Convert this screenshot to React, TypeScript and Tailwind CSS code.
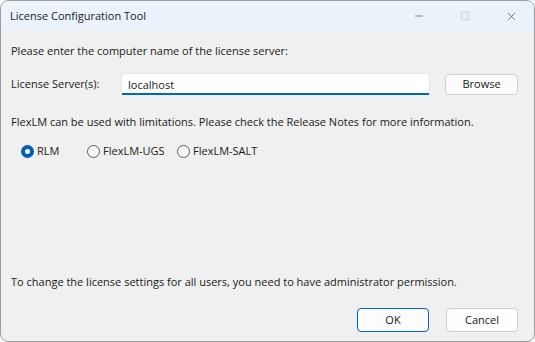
import { Minus, Square, X } from 'lucide-react';

function Radio({ label, checked, width }: { label: string; checked?: boolean; width: string }) {
  return (
    <label className={`flex items-center gap-[3px] ${width}`}>
      {checked ? (
        <span className="flex h-[13px] w-[13px] items-center justify-center rounded-full bg-[#005fb8]">
          <span className="h-[5px] w-[5px] rounded-full bg-white" />
        </span>
      ) : (
        <span className="h-[13px] w-[13px] rounded-full border border-[#5d5d5d] bg-[#f7f7f7]" />
      )}
      <span>{label}</span>
    </label>
  );
}

function App() {
  return (
    <div
      className="flex h-[342px] w-[535px] flex-col overflow-hidden rounded-t-lg rounded-b-lg border border-[#9d9d9d] bg-[#f0f0f0] text-[11px] leading-4 text-[#1a1a1a]"
      style={{ fontFamily: '"Open Sans", "Noto Sans", sans-serif' }}
    >
      <header className="flex h-[30px] shrink-0 items-center bg-[#eaf3fa] pl-[9px]">
        <span className="flex-1">License Configuration Tool</span>
        <div className="flex items-center text-[#1a1a1a]">
          <span className="flex w-[46px] justify-center">
            <Minus size={12} strokeWidth={1} />
          </span>
          <span className="flex w-[46px] justify-center text-[#a8a8a8]">
            <Square size={10} strokeWidth={1} />
          </span>
          <span className="flex w-[46px] justify-center">
            <X size={13} strokeWidth={1} />
          </span>
        </div>
      </header>

      <main className="flex flex-1 flex-col px-[10px] pb-[9px]">
        <p className="mt-3">Please enter the computer name of the license server:</p>

        <div className="mt-[14px] flex items-center">
          <span className="w-[110px]">License Server(s):</span>
          <div className="flex h-[22px] w-[309px] items-center rounded-t-[3px] border border-b-0 border-[#e5e5e5] bg-white pl-[6px] shadow-[inset_0_-2px_0_#0067c0]">
            localhost
          </div>
          <button className="ml-[15px] h-[21px] w-[73px] rounded-[4px] border border-[#d0d0d0] bg-[#fbfbfb]">
            Browse
          </button>
        </div>

        <p className="mt-[19px]">
          FlexLM can be used with limitations. Please check the Release Notes for more information.
        </p>

        <div className="mt-[13px] flex items-center pl-[10px]">
          <Radio label="RLM" checked width="w-[66px]" />
          <Radio label="FlexLM-UGS" width="w-[90px]" />
          <Radio label="FlexLM-SALT" width="w-[100px]" />
        </div>

        <div className="flex-1" />

        <p>To change the license settings for all users, you need to have administrator permission.</p>

        <div className="mt-[18px] flex justify-end gap-[17px] pr-[6px]">
          <button className="h-6 w-[72px] rounded-[4px] border border-[#0067c0] bg-[#fdfdfd]">OK</button>
          <button className="h-6 w-[72px] rounded-[4px] border border-[#d0d0d0] bg-[#fdfdfd]">Cancel</button>
        </div>
      </main>
    </div>
  );
}

export default App;
